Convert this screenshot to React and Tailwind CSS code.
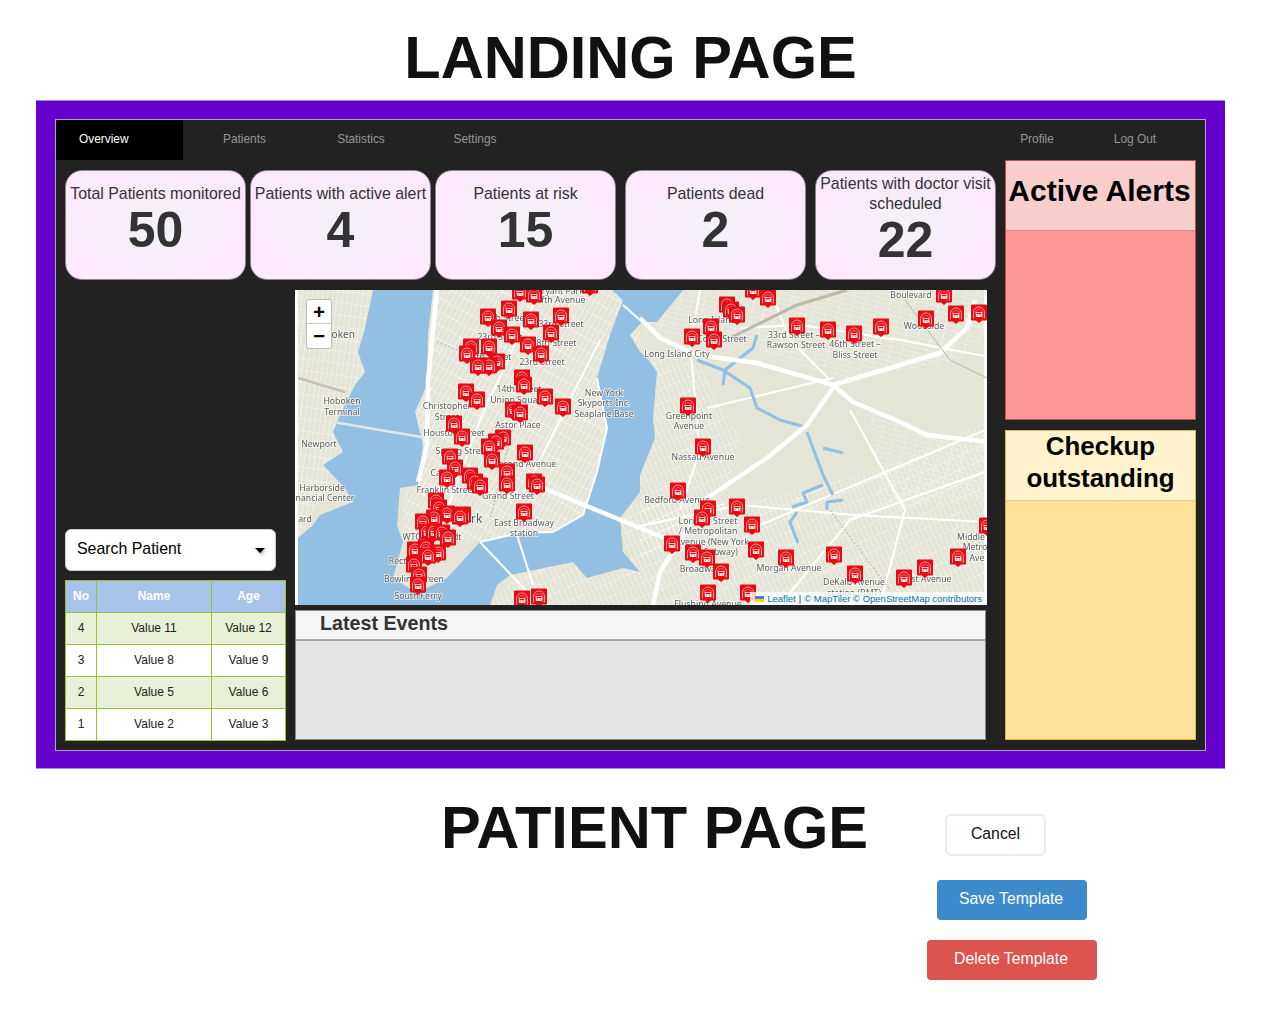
const stats = [
  { label: 'Total Patients monitored', value: '50', cls: 'w-[181px]' },
  { label: 'Patients with active alert', value: '4', cls: 'w-[181px] ml-[4px]' },
  { label: 'Patients at risk', value: '15', cls: 'w-[181px] ml-[4px]' },
  { label: 'Patients dead', value: '2', cls: 'w-[181px] ml-[9px]' },
  { label: 'Patients with doctor visit scheduled', value: '22', cls: 'w-[181px] ml-[9px]' },
];

const rows = [
  ['4', 'Value 11', 'Value 12'],
  ['3', 'Value 8', 'Value 9'],
  ['2', 'Value 5', 'Value 6'],
  ['1', 'Value 2', 'Value 3'],
];

// pin centres, in page coordinates so they read straight off the screenshot
const pins = [
  [520, 292], [534, 295], [509, 309], [488, 317], [531, 320], [561, 316], [499, 328], [512, 335], [551, 333],
  [528, 345], [471, 347], [489, 347], [541, 354], [467, 354], [497, 362], [489, 366], [478, 366], [522, 378],
  [524, 385], [466, 392], [477, 400], [545, 397], [563, 407], [513, 410], [520, 413], [454, 424], [462, 437],
  [503, 438], [496, 442], [489, 447], [450, 457], [492, 460], [525, 453], [507, 472], [455, 468], [470, 476],
  [447, 478], [475, 482], [480, 486], [507, 484], [534, 482], [537, 485], [436, 501], [439, 508], [447, 514],
  [434, 518], [463, 515], [460, 517], [423, 522], [427, 532], [434, 532], [442, 533], [448, 538], [415, 550],
  [426, 548], [438, 553], [428, 556], [414, 565], [419, 575], [418, 585], [524, 512], [522, 599], [539, 597],
  [590, 286], [753, 290], [768, 298], [727, 305], [731, 310], [737, 315], [711, 327], [692, 337], [714, 340],
  [797, 326], [828, 330], [854, 334], [881, 327], [926, 319], [944, 295], [956, 314], [979, 313], [688, 406],
  [703, 447], [678, 491], [708, 509], [737, 507], [702, 518], [752, 525], [672, 544], [693, 553], [707, 558],
  [756, 550], [721, 572], [786, 558], [834, 555], [855, 574], [904, 578], [925, 568], [958, 557], [708, 593],
  [748, 593], [987, 526],
];

const labels = [
  ['Hoboken', 312, 338, 10, 'start'], ['Hoboken', 342, 404], ['Terminal', 342, 415], ['Newport', 319, 447],
  ['Harborside', 322, 491], ['nancial Center', 325, 501], ['ard', 305, 522], ['Christopher', 447, 409],
  ['Street', 447, 420], ['Houston Street', 454, 436], ['Spring Street', 462, 454], ['Canal', 442, 476],
  ['Franklin Street', 446, 493], ['Grand Street', 508, 499], ['East Broadway', 524, 526], ['station', 524, 536],
  ['WTC Cortlandt', 432, 540], ['Rector', 402, 564], ['Bowling Green', 414, 582], ['South Ferry', 418, 599],
  ['York', 470, 523, 12], ['14th Street', 519, 392], ['Union Square', 518, 403], ['Astor Place', 518, 428],
  ['Second Avenue', 525, 467], ['New York', 604, 396], ['Skyports Inc.', 604, 406], ['Seaplane Base', 604, 417],
  ['23rd Street', 542, 365], ['23rd Street', 500, 340], ['28th Street', 554, 346], ['33rd Street', 561, 327],
  ['Fifth Avenue', 560, 303], ['Bryant Park', 560, 294], ['18th Street', 489, 360], ['34th Street', 505, 321],
  ['Long Island', 712, 323], ['Court Street', 722, 342], ['Long Island City', 677, 357], ['33rd Street –', 794, 338],
  ['Rawson Street', 796, 348], ['46th Street –', 855, 347], ['Bliss Street', 855, 358], ['Woodside', 924, 329],
  ['Boulevard', 911, 298], ['Greenpoint', 689, 419], ['Avenue', 689, 429], ['Nassau Avenue', 703, 460],
  ['Bedford Avenue', 677, 503], ['Lorimer Street', 708, 524], ['/ Metropolitan', 708, 534], ['Avenue (New York', 712, 545],
  ['City Subway)', 712, 555], ['Broadway', 700, 572], ['Morgan Avenue', 789, 571], ['DeKalb Avenue', 854, 585],
  ['station (BMT)', 854, 596], ['West Avenue', 925, 582], ['Middle', 971, 540], ['Metro', 975, 550], ['Ave', 977, 561],
  ['Flushing Avenue', 708, 607],
];

const thickRoads = [
  'M640 318L660 338L697 355L757 363L833 385L853 402L900 422L927 435L990 442',
  'M833 385L940 353L967 328L975 300',
  'M833 388L807 425L767 458L707 498L660 572L653 605',
  'M543 488L640 528L690 548',
  'M437 290L428 380L427 445L418 482',
];

const thinRoads = [
  'M740 328L800 325L900 340L990 357',
  'M853 515L987 522',
  'M760 525L990 428',
  'M640 526L740 505L853 515',
  'M480 542L530 595',
  'M517 535L533 585',
  'M707 408L833 378',
  'M623 305L640 320L660 338',
  'M597 378L607 428L597 472L583 515L553 532L520 533L480 542',
  'M540 290L480 420L447 510',
  'M600 340L520 500',
  'M700 290L690 345L700 450L680 510',
  'M850 410L905 510L880 605',
  'M780 605L850 520L990 470',
  'M770 290L790 340L830 380',
];

const creeks = [
  'M697 360L723 370L750 388L757 408L780 420L805 427',
  'M807 432L823 475L833 495',
  'M823 485L803 493L807 502L792 507',
  'M843 500L827 502L827 510',
  'M843 453L823 448',
  'M797 512L790 522L798 543',
  'M757 335L753 348L725 370L723 385',
];

function MapPin({ x, y }) {
  return (
    <g transform={`translate(${x - 8} ${y - 8.5})`}>
      <path d="M1 0H15A1 1 0 0 1 16 1V15A1 1 0 0 1 15 16H11L8 18.5L5 16H1A1 1 0 0 1 0 15V1A1 1 0 0 1 1 0Z" fill="#ea0a12" />
      <path d="M2.5 14V8A5.5 5.5 0 0 1 13.5 8V14" fill="none" stroke="#fff" strokeWidth="0.7" opacity="0.85" />
      <path d="M4.2 8.5A3.8 3.5 0 0 1 11.8 8.5V14" fill="none" stroke="#fff" strokeWidth="0.5" opacity="0.7" />
      <rect x="4.8" y="7.4" width="6.4" height="5" rx="0.8" fill="#fff" />
      <rect x="5.5" y="8.2" width="5" height="1.6" fill="#ea0a12" />
      <circle cx="6.3" cy="11.2" r="0.5" fill="#ea0a12" />
      <circle cx="9.7" cy="11.2" r="0.5" fill="#ea0a12" />
    </g>
  );
}

function MapDrawing() {
  return (
    <svg viewBox="295 290 692 315" className="block w-full h-full blur-[0.35px]">
      <defs>
        <pattern id="mhtn" width="12" height="5" patternUnits="userSpaceOnUse" patternTransform="rotate(-61)">
          <path d="M0 0H12M0 0V5" stroke="#fff" strokeWidth="1.1" />
        </pattern>
        <pattern id="bklyn" width="5" height="13" patternUnits="userSpaceOnUse" patternTransform="rotate(-24)">
          <path d="M0 0H5M0 0V13" stroke="#fff" strokeWidth="0.9" />
        </pattern>
        <pattern id="queens" width="12" height="5" patternUnits="userSpaceOnUse" patternTransform="rotate(14)">
          <path d="M0 0H12M0 0V5" stroke="#fbfbf6" strokeWidth="0.8" />
        </pattern>
        <pattern id="jersey" width="5" height="12" patternUnits="userSpaceOnUse" patternTransform="rotate(8)">
          <path d="M0 0H5M0 0V12" stroke="#fff" strokeWidth="0.9" />
        </pattern>
      </defs>

      <rect x="295" y="290" width="692" height="315" fill="#e4e4d7" />
      <rect x="295" y="290" width="3" height="315" fill="#fff" />
      <rect x="984" y="290" width="3" height="315" fill="#fff" />

      <path d="M298 290H375V400L298 540Z" fill="url(#jersey)" />
      <path d="M430 290H640V400L570 540H400Z" fill="url(#mhtn)" />
      <path d="M640 350L700 365L740 440L720 520L640 560Z" fill="url(#bklyn)" />
      <path d="M640 500L760 500L880 470L985 420V605H490L530 560Z" fill="url(#bklyn)" />
      <path d="M680 290H985V340L960 360L840 380L760 350L700 345L640 330Z" fill="url(#queens)" />
      <path d="M870 410L985 450V500L880 510Z" fill="url(#queens)" />

      <path d="M298 537L314 535L320 562L298 560Z" fill="#c9d8b0" />
      <path d="M298 592L304 605H298Z" fill="#c9d8b0" />

      <path
        d="M373 290L370 305L365 328L358 352L365 372L355 385L340 415L333 432L343 452L323 465L345 488L353 502L320 515L313 525L298 538V605H490L497 585L510 575L573 562L587 578L623 568L640 572L623 552L620 518L640 492L640 475L655 438L653 418L657 372L647 358L640 352L630 335L642 322L657 322L683 290H612L623 300L610 335L597 378L607 428L597 472L583 515L553 532L520 533L480 542L447 578L417 593L393 578L403 542L397 525L400 488L418 485L423 445L415 412L427 385L428 335L433 290Z"
        fill="#93bfe2"
      />

      <path d="M333 422L427 438" fill="none" stroke="#dce7ee" strokeWidth="2.5" />
      {thinRoads.map((d) => (
        <path key={d} d={d} fill="none" stroke="#fff" strokeWidth="2" strokeLinejoin="round" />
      ))}
      {creeks.map((d) => (
        <path key={d} d={d} fill="none" stroke="#93bfe2" strokeWidth="3" strokeLinejoin="round" />
      ))}
      {thickRoads.map((d) => (
        <path key={d} d={d} fill="none" stroke="#fff" strokeWidth="4.5" strokeLinejoin="round" />
      ))}
      <path d="M730 338L797 305L847 290" fill="none" stroke="#bdb9ab" strokeWidth="3" />
      <path d="M905 300L950 360L987 378" fill="none" stroke="#b8b4a6" strokeWidth="1" />
      <path d="M298 378L345 392" fill="none" stroke="#c4c0b4" strokeWidth="2.5" />
      <path d="M437 342L470 355M512 430L490 520M830 510L890 590" fill="none" stroke="#a9abaa" strokeWidth="1" strokeDasharray="2 2" />

      <g fill="#5b5b5b" stroke="#ffffff" strokeWidth="1.6" strokeOpacity="0.75" style={{ paintOrder: 'stroke' }} fontFamily="'Noto Sans', sans-serif">
        {labels.map(([text, x, y, size = 8.7, anchor = 'middle']) => (
          <text key={`${text}${x}`} x={x} y={y} fontSize={size} textAnchor={anchor}>{text}</text>
        ))}
      </g>

      {pins.map(([x, y]) => (
        <MapPin key={`${x}-${y}`} x={x} y={y} />
      ))}
    </svg>
  );
}

function StatCard({ label, value, cls }) {
  return (
    <div className={`${cls} h-[110px] shrink-0 rounded-[17px] border border-[#8b8589] bg-[radial-gradient(ellipse_at_center,#f4f1f7_0%,#f8ecfa_50%,#fde9fe_75%)] flex flex-col items-center justify-center pb-[9px] px-[2px] text-[#333] text-center`}>
      <div className="text-[15.9px] leading-[20px] text-[#333]">{label}</div>
      <div className="text-[50px] leading-[54px] font-bold -mt-[1px]">{value}</div>
    </div>
  );
}

function SidePanel({ title, heightCls, headCls, bodyCls, titleCls }) {
  return (
    <div className={`${heightCls} flex flex-col border ${bodyCls}`}>
      <div className={`h-[70px] shrink-0 flex items-center justify-center text-center font-bold text-black border-b ${headCls} ${titleCls}`}>
        {title}
      </div>
    </div>
  );
}

export default function App() {
  return (
    <div className="h-[1011px] overflow-hidden bg-white font-['Liberation_Sans',Arial,sans-serif] text-[#111]">
      <h1 className="h-[100px] w-[1261px] flex items-center justify-center pt-[16px] text-[59.6px] font-bold leading-none text-[#111]">LANDING PAGE</h1>

      <div className="ml-[36px] w-[1189px] h-[669px] border-y border-[#a587dc] bg-[#6600cc] pt-[18px] pl-[19px]">
        <div className="w-[1151px] h-[632px] border border-[#b59bd6] bg-[#222]">
          <nav className="flex h-[40px] text-[11.9px] text-[#969696]">
            <div className="w-[127px] bg-black text-white flex items-center pl-[23px]"><span className="-mt-px">Overview</span></div>
            <div className="w-[123px] flex items-center justify-center"><span className="-mt-px">Patients</span></div>
            <div className="w-[110px] flex items-center justify-center"><span className="-mt-px">Statistics</span></div>
            <div className="w-[118px] flex items-center justify-center"><span className="-mt-px">Settings</span></div>
            <div className="ml-auto w-[98px] flex items-center justify-center"><span className="-mt-px">Profile</span></div>
            <div className="w-[98px] mr-[21px] flex items-center justify-center"><span className="-mt-px">Log Out</span></div>
          </nav>

          <div className="flex">
            <div className="w-[949px] pl-[9px] pt-[10px]">
              <div className="flex">
                {stats.map((s) => (
                  <StatCard key={s.label} {...s} />
                ))}
              </div>

              <div className="flex mt-[10px]">
                <div className="w-[221px] h-[451px] flex flex-col justify-end">
                  <div className="w-[211px] h-[42px] mb-[9px] rounded-[6px] bg-white border border-[#ccc] flex items-center justify-between pl-[11px] pr-[10px] pb-[2px] text-[15.9px] text-black">
                    <span>Search Patient</span>
                    <span className="w-0 h-0 mt-[2px] border-x-[5px] border-x-transparent border-t-[5px] border-t-black drop-shadow-[1px_2px_1px_rgba(0,0,0,0.3)]" />
                  </div>
                  <table className="w-[220px] h-[161px] table-fixed border-collapse text-[12px] text-[#222] text-center">
                    <colgroup>
                      <col className="w-[31px]" />
                      <col className="w-[115px]" />
                      <col className="w-[74px]" />
                    </colgroup>
                    <thead>
                      <tr className="bg-[#a7c3ea] text-white font-bold h-[32px]">
                        <th className="border border-[#9cbf3b] pb-[2px]">No</th>
                        <th className="border border-[#9cbf3b] pb-[2px]">Name</th>
                        <th className="border border-[#9cbf3b] pb-[2px]">Age</th>
                      </tr>
                    </thead>
                    <tbody>
                      {rows.map((r, i) => (
                        <tr key={r[0]} className={i % 2 === 0 ? 'bg-[#e9f0d8] h-[32px]' : 'bg-white h-[32px]'}>
                          {r.map((c) => (
                            <td key={c} className="border border-[#9cbf3b] pb-[2px]">{c}</td>
                          ))}
                        </tr>
                      ))}
                    </tbody>
                  </table>
                </div>

                <div className="ml-[9px] w-[692px]">
                  <div className="relative h-[315px] overflow-hidden">
                    <MapDrawing />
                    <div className="absolute left-[11px] top-[9px] w-[26px] h-[50px] rounded-[3px] border border-[#bbb] bg-white text-black font-bold flex flex-col items-center">
                      <div className="h-[24px] w-full border-b border-[#ccc] flex items-center justify-center text-[20px] leading-none">+</div>
                      <div className="h-[24px] flex items-center justify-center text-[20px] leading-none">−</div>
                    </div>
                    <div className="absolute right-0 bottom-0 h-[13px] pl-[5px] pr-[5px] pt-[1px] bg-white/75 flex items-center gap-[3px] text-[9.5px] leading-none text-[#333]">
                      <svg width="9" height="6" viewBox="0 0 9 6" className="shrink-0">
                        <rect width="9" height="3" fill="#4C7BE1" />
                        <rect y="3" width="9" height="3" fill="#FFD500" />
                      </svg>
                      <span className="text-[#0078a8]">Leaflet</span>
                      <span>|</span>
                      <span className="text-[#0078a8]">© MapTiler © OpenStreetMap contributors</span>
                    </div>
                  </div>

                  <div className="mt-[5px] w-[691px] h-[130px] border border-[#8a8a8a] bg-[#e5e5e5]">
                    <div className="h-[30px] border-b-2 border-[#a6a6a6] bg-[#f5f5f5] pl-[24px] text-[19.7px] leading-[24px] font-bold text-[#333]">
                      Latest Events
                    </div>
                  </div>
                </div>
              </div>
            </div>

            <div className="w-[191px]">
              <SidePanel
                title="Active Alerts"
                heightCls="h-[260px]"
                bodyCls="border-[#b85450] bg-[#ff9797]"
                headCls="bg-[#f8cecc] border-[#d98a87] pb-[10px] pr-[2px]"
                titleCls="text-[30px] leading-[36px]"
              />
              <div className="mt-[10px]">
                <SidePanel
                  title="Checkup outstanding"
                  heightCls="h-[310px]"
                  bodyCls="border-[#d6b656] bg-[#ffe299]"
                  headCls="bg-[#fff2cc] border-[#e6cd85] pb-[8px]"
                  titleCls="text-[25.9px] leading-[32px] px-[6px]"
                />
              </div>
            </div>
          </div>
        </div>
      </div>

      <div className="flex h-[242px]">
        <h2 className="w-[945px] h-[117px] pl-[441px] flex items-center text-[59.6px] font-bold leading-none text-[#111] whitespace-nowrap">PATIENT PAGE</h2>
        <div className="flex flex-col items-start pt-[45px] text-[15.8px]">
          <button className="w-[101px] h-[42px] pb-[2px] rounded-[6px] border-2 border-[#ececec] bg-white text-[#111]">Cancel</button>
          <button className="-ml-[8px] mt-[24px] w-[150px] h-[40px] pb-[2px] pr-[2px] rounded-[4px] bg-[#3d8bcd] text-white">Save Template</button>
          <button className="-ml-[18px] mt-[20px] w-[170px] h-[40px] pb-[2px] pr-[2px] rounded-[4px] bg-[#dc544f] text-white">Delete Template</button>
        </div>
      </div>
    </div>
  );
}
